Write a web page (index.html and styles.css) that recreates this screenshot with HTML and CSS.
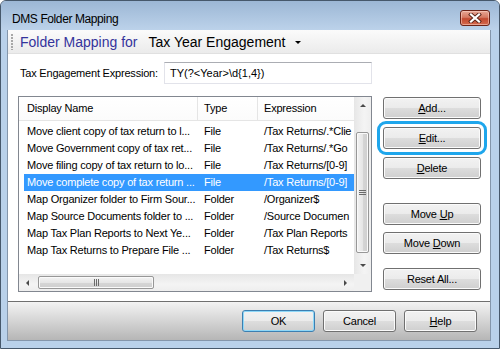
FILE: index.html
```html
<!DOCTYPE html>
<html>
<head>
<meta charset="utf-8">
<link rel="stylesheet" href="styles.css">
</head>
<body>
<div class="window">
  <div class="titlebar">
    <span class="title">DMS Folder Mapping</span>
    <div class="close">
      <svg width="14" height="10" viewBox="0 0 14 10">
        <path d="M3 1.5 L11 8.5 M11 1.5 L3 8.5" stroke="#5a2418" stroke-width="4" stroke-linecap="square" fill="none"/>
        <path d="M3 1.5 L11 8.5 M11 1.5 L3 8.5" stroke="#ffffff" stroke-width="2.2" stroke-linecap="square" fill="none"/>
      </svg>
    </div>
  </div>
  <div class="frame">
    <div class="client">
      <div class="toolbar">
        <span class="grip"></span>
        <span class="tb-label">Folder Mapping for</span>
        <span class="tb-value">Tax Year Engagement</span>
        <span class="tb-caret"></span>
      </div>
      <div class="body">
        <div class="expr-row">
          <span class="expr-label">Tax Engagement Expression:</span>
          <div class="input">TY(?&lt;Year&gt;\d{1,4})</div>
        </div>
        <div class="main">
          <div class="listview">
            <div class="lv-top">
              <div class="lv-content">
                <div class="lv-header">
                  <div class="hcell c1">Display Name</div>
                  <div class="hcell c2">Type</div>
                  <div class="hcell c3">Expression</div>
                </div>
                <div class="lv-rows">
                  <div class="row"><span class="cell">Move client copy of tax return to l...</span><span class="cell">File</span><span class="cell">/Tax Returns/.*Clie</span></div>
                  <div class="row"><span class="cell">Move Government copy of tax ret...</span><span class="cell">File</span><span class="cell">/Tax Returns/.*Go</span></div>
                  <div class="row"><span class="cell">Move filing copy of tax return to lo...</span><span class="cell">File</span><span class="cell">/Tax Returns/[0-9]</span></div>
                  <div class="row selected"><span class="cell">Move complete copy of tax return ...</span><span class="cell">File</span><span class="cell">/Tax Returns/[0-9]</span></div>
                  <div class="row"><span class="cell">Map Organizer folder to Firm Sour...</span><span class="cell">Folder</span><span class="cell">/Organizer$</span></div>
                  <div class="row"><span class="cell">Map Source Documents folder to ...</span><span class="cell">Folder</span><span class="cell">/Source Documen</span></div>
                  <div class="row"><span class="cell">Map Tax Plan Reports to Next Ye...</span><span class="cell">Folder</span><span class="cell">/Tax Plan Reports</span></div>
                  <div class="row"><span class="cell">Map Tax Returns to Prepare File ...</span><span class="cell">Folder</span><span class="cell">/Tax Returns$</span></div>
                </div>
              </div>
              <div class="vscroll">
                <div class="sbtn"><span class="arr up"></span></div>
                <div class="vthumb"><span class="grip-h"></span></div>
                <div class="vfill"></div>
                <div class="sbtn"><span class="arr down"></span></div>
              </div>
            </div>
            <div class="lv-bottom">
              <div class="hscroll">
                <div class="sbtn"><span class="arr left"></span></div>
                <div class="hthumb"><span class="grip-v"></span></div>
                <div class="hfill"></div>
                <div class="sbtn"><span class="arr right"></span></div>
              </div>
              <div class="corner"></div>
            </div>
          </div>
          <div class="side">
            <div class="btn b-add"><span><u>A</u>dd...</span></div>
            <div class="btn b-edit focus"><span><u>E</u>dit...</span></div>
            <div class="btn b-del"><span><u>D</u>elete</span></div>
            <div class="btn b-up"><span>Move <u>U</u>p</span></div>
            <div class="btn b-down"><span>Move <u>D</u>own</span></div>
            <div class="btn b-reset"><span>Reset All...</span></div>
          </div>
        </div>
      </div>
      <div class="footer">
        <div class="btn fbtn default"><span>OK</span></div>
        <div class="btn fbtn"><span>Cancel</span></div>
        <div class="btn fbtn"><span><u>H</u>elp</span></div>
      </div>
    </div>
  </div>
</div>
</body>
</html>
```
FILE: styles.css
```css
* { box-sizing: border-box; }
html, body { margin: 0; padding: 0; }
body {
  width: 500px;
  height: 349px;
  overflow: hidden;
  font-family: "Liberation Sans", Arial, sans-serif;
  font-size: 11px;
  color: #000;
  background: #ffffff;
}
.window {
  width: 500px;
  height: 349px;
  border: 1px solid #46586b;
  border-radius: 6px 6px 0 0;
  background: #b9d1ea;
  display: flex;
  flex-direction: column;
  overflow: hidden;
}
.titlebar {
  height: 29px;
  flex: none;
  display: flex;
  align-items: flex-start;
  background: linear-gradient(#9cb7d5, #bcd2ea);
}
.title {
  font-size: 12px;
  letter-spacing: -0.4px;
  line-height: 14px;
  padding: 11px 0 0 11px;
  color: #000;
}
.close {
  margin: 9px 9px 0 auto;
  width: 30px;
  height: 16px;
  border: 1px solid #6b2418;
  border-radius: 3px;
  background: linear-gradient(#e7a795 0%, #d57a63 45%, #c24a30 55%, #d46a4e 100%);
  box-shadow: inset 0 0 0 1px rgba(255, 220, 210, 0.5);
  display: flex;
  align-items: center;
  justify-content: center;
}
.frame {
  flex: 1;
  display: flex;
  padding: 0 8px 7px 6px;
}
.client {
  flex: 1;
  display: flex;
  flex-direction: column;
  border: 1px solid #8496ab;
  border-top: none;
  background: #fff;
}
.toolbar {
  height: 24px;
  flex: none;
  display: flex;
  align-items: center;
  background: linear-gradient(#fbfbfb, #ebebeb);
  border-bottom: 1px solid #e0e0e0;
}
.grip {
  width: 2px;
  height: 16px;
  margin-left: 3px;
  background: repeating-linear-gradient(to bottom, #a8a8a8 0 2px, transparent 2px 3px);
}
.tb-label {
  margin-left: 7px;
  font-size: 14px;
  color: #34349c;
}
.tb-value {
  margin-left: 11px;
  font-size: 14px;
  color: #000;
}
.tb-caret {
  margin-left: 9px;
  width: 0;
  height: 0;
  border-left: 3px solid transparent;
  border-right: 3px solid transparent;
  border-top: 3px solid #000;
  margin-top: 1px;
}
.body {
  height: 247px;
  flex: none;
  padding: 8px 0 0 10px;
}
.expr-row {
  display: flex;
  align-items: center;
  height: 22px;
}
.expr-label {
  width: 146px;
  padding-left: 2px;
  letter-spacing: -0.2px;
}
.input {
  width: 208px;
  height: 22px;
  border: 1px solid #e2e3ea;
  border-top-color: #abadb3;
  padding-left: 5px;
  line-height: 20px;
}
.main {
  display: flex;
  margin-top: 12px;
}
.listview {
  width: 354px;
  height: 196px;
  border: 1px solid #828790;
  display: flex;
  flex-direction: column;
}
.lv-top {
  height: 177px;
  display: flex;
}
.lv-content {
  width: 335px;
  overflow: hidden;
}
.lv-header {
  height: 24px;
  display: grid;
  grid-template-columns: 179px 60px 1fr;
  border-bottom: 1px solid #e5e5e5;
  background: linear-gradient(#ffffff, #fbfbfb);
}
.hcell {
  line-height: 23px;
  white-space: nowrap;
  letter-spacing: -0.2px;
}
.hcell.c1 { padding-left: 8px; border-right: 1px solid #e5e5e5; }
.hcell.c2 { padding-left: 6px; border-right: 1px solid #e5e5e5; }
.hcell.c3 { padding-left: 6px; }
.lv-rows {
  padding-top: 2px;
  margin-left: 5px;
}
.row {
  height: 17px;
  display: grid;
  grid-template-columns: 174px 60px 96px;
  line-height: 17px;
  white-space: nowrap;
  letter-spacing: -0.2px;
}
.row .cell:nth-child(1) { padding-left: 3px; }
.row .cell:nth-child(2) { padding-left: 6px; }
.row .cell:nth-child(3) { padding-left: 6px; }
.row.selected {
  background: #3399ff;
  color: #fff;
}
.vscroll {
  width: 17px;
  display: flex;
  flex-direction: column;
  background: linear-gradient(to right, #e6e6e6, #f4f4f4 60%, #eeeeee);
}
.sbtn {
  width: 17px;
  height: 17px;
  flex: none;
  display: flex;
  align-items: center;
  justify-content: center;
}
.arr {
  width: 0;
  height: 0;
  border: 3px solid transparent;
}
.arr.up { border-bottom: 3px solid #4a4a4a; border-top-width: 0; }
.arr.down { border-top: 3px solid #4a4a4a; border-bottom-width: 0; }
.arr.left { border-right: 3px solid #4a4a4a; border-left-width: 0; }
.arr.right { border-left: 3px solid #4a4a4a; border-right-width: 0; }
.vthumb {
  margin: 18px 2px 0 2px;
  height: 121px;
  flex: none;
  border: 1px solid #979797;
  border-radius: 2px;
  background: linear-gradient(to right, #f3f3f3, #e6e6e6 50%, #d6d6d6 51%, #cfcfcf);
  box-shadow: inset 0 0 0 1px #fafafa;
  display: flex;
  align-items: center;
  justify-content: center;
}
.grip-h {
  width: 7px;
  height: 5px;
  background: repeating-linear-gradient(to bottom, #6a6a6a 0 1px, transparent 1px 2px);
}
.vfill { flex: 1; }
.lv-bottom {
  height: 17px;
  display: flex;
}
.hscroll {
  width: 335px;
  display: flex;
  background: linear-gradient(#e6e6e6, #f4f4f4 60%, #eeeeee);
}
.hthumb {
  margin: 2px 0 2px 2px;
  width: 116px;
  flex: none;
  border: 1px solid #979797;
  border-radius: 2px;
  background: linear-gradient(#f3f3f3, #e6e6e6 50%, #d6d6d6 51%, #cfcfcf);
  box-shadow: inset 0 0 0 1px #fafafa;
  display: flex;
  align-items: center;
  justify-content: center;
}
.grip-v {
  width: 5px;
  height: 7px;
  background: repeating-linear-gradient(to right, #6a6a6a 0 1px, transparent 1px 2px);
}
.hfill { flex: 1; }
.corner {
  width: 17px;
  background: #f0f0f0;
}
.side {
  margin-left: 11px;
  width: 98px;
  display: flex;
  flex-direction: column;
  padding-top: 1px;
}
.btn {
  height: 22px;
  border: 1px solid #707070;
  border-radius: 3px;
  background: linear-gradient(#f2f2f2 0%, #ebebeb 50%, #dddddd 51%, #cfcfcf 100%);
  box-shadow: inset 0 0 0 1px #fbfbfb;
  display: flex;
  align-items: center;
  justify-content: center;
  white-space: nowrap;
  letter-spacing: -0.2px;
}
.side .btn { width: 98px; }
.b-edit { margin-top: 8px; }
.b-del { margin-top: 8px; }
.b-up { margin-top: 24px; }
.b-down { margin-top: 7px; }
.b-reset { margin-top: 14px; }
.focus {
  outline: 3px solid #1ea6ec;
  outline-offset: 3px;
}
.footer {
  flex: 1;
  border-top: 1px solid #707070;
  background: linear-gradient(#f3f3f3, #b6b6b6);
  display: flex;
  justify-content: flex-end;
  align-items: flex-start;
  gap: 8px;
  padding: 8px 13px 0 0;
}
.fbtn { width: 73px; }
.default {
  border-color: #3c7fb1;
  box-shadow: inset 0 0 0 1px #8fd8f8;
}
```
